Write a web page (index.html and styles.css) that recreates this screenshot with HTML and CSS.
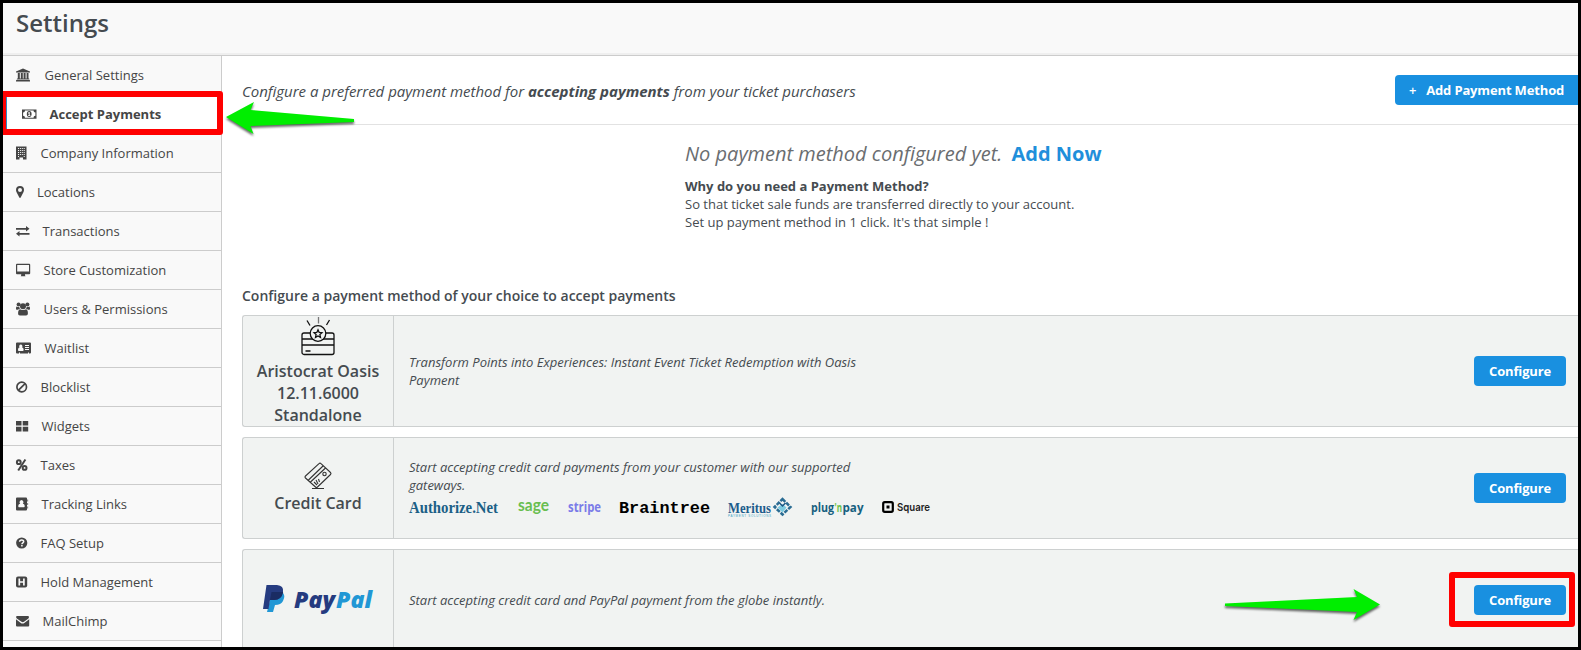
FILE: index.html
```html
<!DOCTYPE HTML>
<html>
<head>
<meta charset="utf-8">
<title>Settings</title>
<link rel="stylesheet" href="styles.css">
</head>

<body>
<header class="header">
	<h1>Settings</h1>
</header>
<div class="wrap">
	<ul class="sidebar">
		<li><svg width="16" height="14" viewBox="0 0 16 14"><path d="M7 .5L14 3.500v1H0v-1zM1.800 5h2v5.500h1V5h2v5.500h.8V5h2v5.500h1V5h1.900v5.500h.5l.4.5v.5H.8V11l.4-.5h.6zM.4 12h13.200l.4.5v1H0v-1z"/></svg>General Settings</li>
		<li class="active"><svg width="15" height="14" viewBox="0 0 15 14"><path fill-rule="evenodd" d="M0 2.500h14.500v9.300H0zM3 3.500A2 2 0 0 1 1.100 5.500v3.200A2 2 0 0 1 3 10.700h8.500a2 2 0 0 1 1.900-2V5.500a2 2 0 0 1-1.900-2zM7.200 4a2.400 3 0 1 1 0 6 2.400 3 0 1 1 0-6zM6.100 5.800v.8h.7v1.600H6v.7h2.400v-.7h-.7V5.100H7z"/></svg>Accept Payments</li>
		<li><svg width="12" height="14" viewBox="0 0 12 14"><path fill-rule="evenodd" d="M0 .5h10.500v13H7V11.500H3.500v2H0zM2 2v1h1V2zm1.900 0v1h1V2zm1.900 0v1h1V2zm1.900 0v1h1V2zM2 4v1h1V4zm1.900 0v1h1V4zm1.900 0v1h1V4zm1.900 0v1h1V4zM2 6v1h1V6zm1.900 0v1h1V6zm1.900 0v1h1V6zm1.900 0v1h1V6zM2 8v1h1V8zm1.900 0v1h1V8zm1.900 0v1h1V8zm1.900 0v1h1V8zM2 10v1h1v-1zm5.700 0v1h1v-1z"/></svg>Company Information</li>
		<li><svg width="8.500" height="14" viewBox="0 0 8.500 14"><path fill-rule="evenodd" d="M4 1a4 4 0 0 1 4 4c0 1-.3 1.600-.6 2.200L4.700 12.600a.8.8 0 0 1-1.400 0L.6 7.200C.3 6.600 0 6 0 5a4 4 0 0 1 4-4zm0 2a2 2 0 1 0 0 4 2 2 0 0 0 0-4z"/></svg>Locations</li>
		<li><svg width="14" height="14" viewBox="0 0 14 14"><path d="M0 4h10V2l3.500 2.800L10 7.600V5.700H0zM13.500 9H3.500V7L0 9.800l3.500 2.800v-1.900h10z"/></svg>Transactions</li>
		<li><svg width="15" height="14" viewBox="0 0 15 14"><path fill-rule="evenodd" d="M1 .8h12.200a1 1 0 0 1 1 1v8.400a1 1 0 0 1-1 1H9v1l.5 1H4.700l.5-1v-1H1a1 1 0 0 1-1-1V1.800a1 1 0 0 1 1-1zM1.200 2v6.500H13V2z"/></svg>Store Customization</li>
		<li><svg width="15" height="14" viewBox="0 0 15 14"><circle cx="7" cy="4.300" r="3"/><circle cx="2.600" cy="2.500" r="2"/><circle cx="11.400" cy="2.500" r="2"/><path d="M4 7.200c1 1 5 1 6.100 0 1.500.6 1.800 2.300 1.800 4.300 0 1.200-.8 2-1.800 2H3.900c-1.200 0-1.800-.8-1.800-2 0-2 .4-3.700 1.900-4.300zM.8 4.500c1 .6 1.800.6 2.600.4 0 1 .3 1.500.6 2-.9 0-1.700.2-2.300.8C.4 7.900 0 7.300 0 6.700c0-1 .2-2 .8-2.200zM13.200 4.500c-1 .6-1.800.6-2.600.4 0 1-.3 1.500-.6 2 .9 0 1.700.2 2.300.8 1.300.2 1.700-.4 1.700-1 0-1-.2-2-.8-2.200z"/></svg>Users &amp; Permissions</li>
		<li><svg width="16" height="14" viewBox="0 0 16 14"><path fill-rule="evenodd" d="M1 1.500h13a1 1 0 0 1 1 1v9a1 1 0 0 1-1 1h-1v-1h-1v1H4v-1H3v1H1a1 1 0 0 1-1-1v-9a1 1 0 0 1 1-1zM4.800 3.500a1.700 1.900 0 0 0-1.300 3C2.500 6.600 2 7.600 2 9c0 .6.300 1 .8 1h4c.5 0 .8-.4.800-1 0-1.400-.5-2.400-1.500-2.500a1.700 1.900 0 0 0-1.300-3zM9 4v1h4V4zm0 2v1h4V6zm0 2v1h4V8z"/></svg>Waitlist</li>
		<li><svg width="12" height="14" viewBox="0 0 12 14"><g fill="none" stroke="#454545" stroke-width="1.700"><circle cx="5.700" cy="7" r="4.800"/><path d="M2.300 10.400L9.100 3.600"/></g></svg>Blocklist</li>
		<li><svg width="13" height="14" viewBox="0 0 13 14"><path d="M0 2h5.500v4.600H0zM6.700 2h5.500v4.600H6.700zM0 7.800h5.500v4.600H0zM6.700 7.800h5.500v4.600H6.700z"/></svg>Widgets</li>
		<li><svg width="12" height="14" viewBox="0 0 12 14"><g fill="none" stroke="#454545" stroke-width="2"><circle cx="2.800" cy="4.200" r="1.900"/><circle cx="8.600" cy="9.900" r="1.900"/><path d="M9.400 1.500L2.200 12.500"/></g></svg>Taxes</li>
		<li><svg width="13" height="14" viewBox="0 0 13 14"><path fill-rule="evenodd" d="M1 .5h9a1 1 0 0 1 1 1v11a1 1 0 0 1-1 1H1a1 1 0 0 1-1-1v-11a1 1 0 0 1 1-1zM5.500 3a2 2.200 0 0 0-1.300 3.800C2.900 7 2.300 8 2.300 9.300c0 .6.400 1 .9 1h4.600c.5 0 .9-.4.9-1C8.700 8 8.100 7 6.800 6.800A2 2.200 0 0 0 5.500 3zM11.400 2.500h.7v2h-.7zM11.400 6h.7v2h-.7zM11.400 9.500h.7v2h-.7z"/></svg>Tracking Links</li>
		<li><svg width="12" height="14" viewBox="0 0 12 14"><circle cx="5.700" cy="7" r="5.600"/><path d="M3.600 5.800C3.700 3.300 7.700 3.300 7.700 5.500c0 1.300-1.800 1.300-1.800 2.700M5.900 9v1.600" fill="none" stroke="#f9f9f9" stroke-width="1.500"/></svg>FAQ Setup</li>
		<li><svg width="12" height="14" viewBox="0 0 12 14"><rect y="1.500" width="11.200" height="11" rx="2"/><path d="M3.300 3.500v7M7.900 3.500v7M3.300 7h4.600" fill="none" stroke="#f9f9f9" stroke-width="1.700"/></svg>Hold Management</li>
		<li><svg width="14" height="14" viewBox="0 0 14 14"><path d="M1 2h11c1 0 1.400 1.500.4 2.400L8 7.800c-.8.600-1.700.6-2.500 0L.8 4.400C-.2 3.500 0 2 1 2zM0 5.200l4.800 3.700c1 .8 2.500.8 3.500 0l4.900-3.700v6.300a1 1 0 0 1-1 1H1a1 1 0 0 1-1-1z"/></svg>MailChimp</li>
		<li></li>
	</ul>
	<div class="main">
		<div class="topbar">
			<p>Configure a preferred payment method for <b>accepting payments</b> from your ticket purchasers</p>
			<button class="btn add"><span>+</span>Add Payment Method</button>
		</div>
		<div class="empty">
			<p class="none">No payment method configured yet. <a>Add Now</a></p>
			<p><b>Why do you need a Payment Method?</b></p>
			<p>So that ticket sale funds are transferred directly to your account.</p>
			<p>Set up payment method in 1 click. It's that simple !</p>
		</div>
		<h2>Configure a payment method of your choice to accept payments</h2>
		<div class="card tall">
			<div class="name">
				<svg width="36" height="42" viewBox="0 0 36 42" fill="none" stroke="#111" stroke-width="1.300">
					<rect x="2" y="15" width="32" height="21.500" rx="2"/>
					<path d="M2 21h32M2 27h32M5.500 33h5" />
					<circle cx="18" cy="15.500" r="7.800" fill="#f1f3f2"/>
					<path d="M18 11.800l1.200 2.600 2.800.3-2.100 1.900.6 2.800-2.500-1.400-2.500 1.400.6-2.800-2.100-1.900 2.800-.3z"/>
					<path d="M18.500-1v6.500" stroke="#777"/>
					<path d="M7 2.500l3 5M29.500 2l-3 5"/>
				</svg>
				<span>Aristocrat Oasis 12.11.6000 Standalone</span>
			</div>
			<div class="info"><p>Transform Points into Experiences: Instant Event Ticket Redemption with Oasis Payment</p></div>
			<button class="btn">Configure</button>
		</div>
		<div class="card">
			<div class="name">
				<svg width="28" height="28" viewBox="0 0 28 28" fill="none" stroke="#333" stroke-width="1.100">
					<path d="M1.500 12L15-.3q1-1 2 0l9.500 8.800q1 1 0 2L13.500 23q-1 1-2 0l-10-9q-1-1 0-2zM4.500 16L19 2M6.500 18L21.500 4M8 24.500h12"/>
					<circle cx="20.500" cy="10" r="1.700"/>
					<path d="M10 18l3 3M12 16l2 4M14.500 15l1 3"/>
				</svg>
				<span>Credit Card</span>
			</div>
			<div class="info">
				<p>Start accepting credit card payments from your customer with our supported gateways.</p>
				<div class="logos">
					<svg width="90" height="24"><text class="authorize" x="0" y="19" textLength="89" lengthAdjust="spacingAndGlyphs">Authorize.Net</text></svg>
					<svg width="32" height="24"><text class="sage" x="1" y="17" textLength="31" lengthAdjust="spacingAndGlyphs">sage</text></svg>
					<svg width="34" height="24"><text class="stripe" x="1" y="18" textLength="33" lengthAdjust="spacingAndGlyphs">stripe</text></svg>
					<svg width="91" height="24"><text class="braintree" x="0" y="19" textLength="91" lengthAdjust="spacingAndGlyphs">Braintree</text></svg>
					<svg width="65" height="24">
						<text class="meritus" x="0" y="19" textLength="43" lengthAdjust="spacingAndGlyphs">Meritus</text>
						<text class="tiny" x="0" y="23" textLength="43">PAYMENT SOLUTIONS</text>
						<path d="M54.500 5l8 8-8 7.500-8-7.500z" fill="none" stroke="#2a6c93" stroke-width="2.500" stroke-dasharray="4 1.200"/>
						<path d="M54.500 10l4 3.500-4 5-5-5z" fill="#7ccbe0"/>
						<path d="M51.500 9l3 3 3-3" fill="none" stroke="#1b5583" stroke-width="1.500"/>
					</svg>
					<svg width="53" height="24">
						<text class="plug" x="0" y="18" textLength="23" lengthAdjust="spacingAndGlyphs">plug</text>
						<text class="plug plug-n" x="23.500" y="18" textLength="7.500" lengthAdjust="spacingAndGlyphs">'n</text>
						<text class="plug" x="31.500" y="18" textLength="21" lengthAdjust="spacingAndGlyphs">pay</text>
					</svg>
					<svg width="50" height="24">
						<rect x="1.200" y="8.200" width="9.600" height="9.600" rx="1.500" fill="none" stroke="#000" stroke-width="2.200"/>
						<rect x="4.500" y="11.500" width="3" height="3"/>
						<text class="square" x="15" y="17" textLength="33" lengthAdjust="spacingAndGlyphs">Square</text>
					</svg>
				</div>
			</div>
			<button class="btn">Configure</button>
		</div>
		<div class="card">
			<div class="name">
				<svg width="112" height="32" viewBox="0 0 112 32">
					<path d="M10 7h10q4 3 1 9-2 4-8 4l-2 7H5z" fill="#2197d5"/>
					<path d="M4.500 0H15q7 .5 6 7-1.500 8-9 8H8L6.500 24H1z" fill="#253b80"/>
					<path d="M9.500 7h11.700q-1.700 8-9.200 8H8z" fill="#1a2c63"/>
					<text class="paypal" x="32" y="23" textLength="41" lengthAdjust="spacingAndGlyphs">Pay</text>
					<text class="paypal pal" x="74" y="23" textLength="36" lengthAdjust="spacingAndGlyphs">Pal</text>
				</svg>
			</div>
			<div class="info"><p>Start accepting credit card and PayPal payment from the globe instantly.</p></div>
			<button class="btn">Configure</button>
		</div>
	</div>
</div>

<!-- highlights over the page -->
<div class="mark mark-menu"></div>
<div class="mark mark-button"></div>
<svg class="arrow arrow-menu" width="130" height="36"><path d="M0 15L28 0l-3.500 8L128 17v3L24.500 24l3 8z"/></svg>
<svg class="arrow arrow-button" width="160" height="38"><path d="M0 14.500l132-6.500-3.500-8L155 15.500 128.500 31l3.500-8L0 17z"/></svg>
</body>
</html>
```
FILE: styles.css
```css
*{
	margin: 0;
	padding: 0;
	box-sizing: border-box;
}

body{
	position: relative;
	height: 650px;
	border: 3px solid #000;
	font-family: "Open Sans", sans-serif;
	font-size: 13px;
	line-height: 18px;
	color: #454b50;
	background-color: #fff;
}
svg{
	flex: none;
	overflow: visible;
}
.header{
	height: 53px;
	padding: 5px 13px;
	background-color: #f9f9f9;
	border-bottom: 1px solid #ccc;
	box-shadow: inset 0 -2px 0 #efefef;
}
.header h1{
	font-size: 24px;
	line-height: 30px;
	font-weight: 600;
}
.wrap{
	display: flex;
	height: 591px;
	overflow: hidden;
}

.sidebar{
	flex: none;
	width: 219px;
	list-style: none;
	background-color: #f9f9f9;
	border-right: 1px solid #ccc;
}
.sidebar li{
	display: flex;
	align-items: center;
	gap: 12.5px;
	height: 39px;
	padding-left: 13px;
	border-bottom: 1px solid #ccc;
	color: #454545;
}
.sidebar svg{
	fill: #454545;
}
.sidebar .active{
	padding-left: 15px;
	border-left: 4px solid #2b8cc4;
	background-color: #fff;
	font-weight: bold;
}

.main{
	flex: 1;
	padding-left: 20px;
	min-width: 0;
}
.topbar{
	display: flex;
	align-items: center;
	justify-content: space-between;
	height: 69px;
	border-bottom: 1px solid #e2e2e2;
}
.topbar p{
	padding-top: 2px;
	font-size: 15px;
	letter-spacing: -.02px;
	font-style: italic;
}
.btn{
	flex: none;
	width: 92px;
	height: 30px;
	border: none;
	border-radius: 4px;
	background-color: #1990e0;
	color: #fff;
	font-family: inherit;
	font-size: 13px;
	font-weight: bold;
	letter-spacing: -.15px;
}
.add{
	width: 183px;
	border-radius: 4px 0 0 4px;
}
.add span{
	margin-right: 10px;
	font-weight: 600;
}

.empty{
	height: 161px;
	padding: 15px 0 0 443px;
}
.empty .none{
	margin-bottom: 9px;
	font-size: 20px;
	line-height: 28px;
	font-style: italic;
	color: #6a6d70;
}
.none a{
	margin-left: 4px;
	font-style: normal;
	font-weight: bold;
	color: #1f8fdb;
}
h2{
	height: 29px;
	font-size: 14px;
	line-height: 20px;
	font-weight: 600;
}

.card{
	display: flex;
	align-items: center;
	height: 102px;
	margin-bottom: 10px;
	padding-right: 12px;
	border: 1px solid #cdd0d0;
	border-right: none;
	border-radius: 3px 0 0 3px;
	background-color: #f1f3f2;
}
.tall{
	height: 112px;
}
.name{
	display: flex;
	flex-direction: column;
	align-items: center;
	justify-content: center;
	flex: none;
	width: 151px;
	height: 100%;
	padding: 2px 10px 0;
	border-right: 1px solid #cdd0d0;
	font-size: 16px;
	line-height: 22px;
	font-weight: 600;
	text-align: center;
}
.info{
	flex: 1;
	padding-left: 15px;
}
.info p{
	width: 460px;
	font-style: italic;
}
.logos{
	display: flex;
	gap: 18px;
}

.authorize{
	font: bold 17px "Liberation Serif", serif;
	fill: #1b5f86;
}
.sage{
	font: bold 17px "Lato", sans-serif;
	fill: #69be50;
}
.stripe{
	font: bold 14px "Open Sans", sans-serif;
	fill: #7a7be8;
}
.braintree{
	font: bold 17px "Liberation Mono", monospace;
	fill: #000;
}
.meritus{
	font: bold 14px "Liberation Serif", serif;
	fill: #1d5c8c;
}
.tiny{
	font: 3px "Liberation Sans", sans-serif;
	fill: #3fa3c4;
}
.plug{
	font: bold 12px "Open Sans", sans-serif;
	fill: #16607f;
}
.plug-n{
	fill: #6cc24a;
}
.square{
	font: 600 11px "Inter", sans-serif;
	fill: #222;
}
.paypal{
	font: italic 800 22px "Open Sans", sans-serif;
	fill: #253b80;
}
.pal{
	fill: #2197d5;
}

.mark{
	position: absolute;
	border: 6px solid #f00;
	border-radius: 3px;
}
.mark-menu{
	left: -3px;
	top: 88px;
	width: 223px;
	height: 44px;
}
.mark-button{
	left: 1446px;
	top: 569px;
	width: 126px;
	height: 55px;
}
.arrow{
	position: absolute;
	overflow: visible;
	fill: #00ee00;
	filter: drop-shadow(0 2px 1px rgba(0,0,0,.6));
}
.arrow-menu{
	left: 223px;
	top: 99px;
}
.arrow-button{
	left: 1222px;
	top: 586px;
}
```
